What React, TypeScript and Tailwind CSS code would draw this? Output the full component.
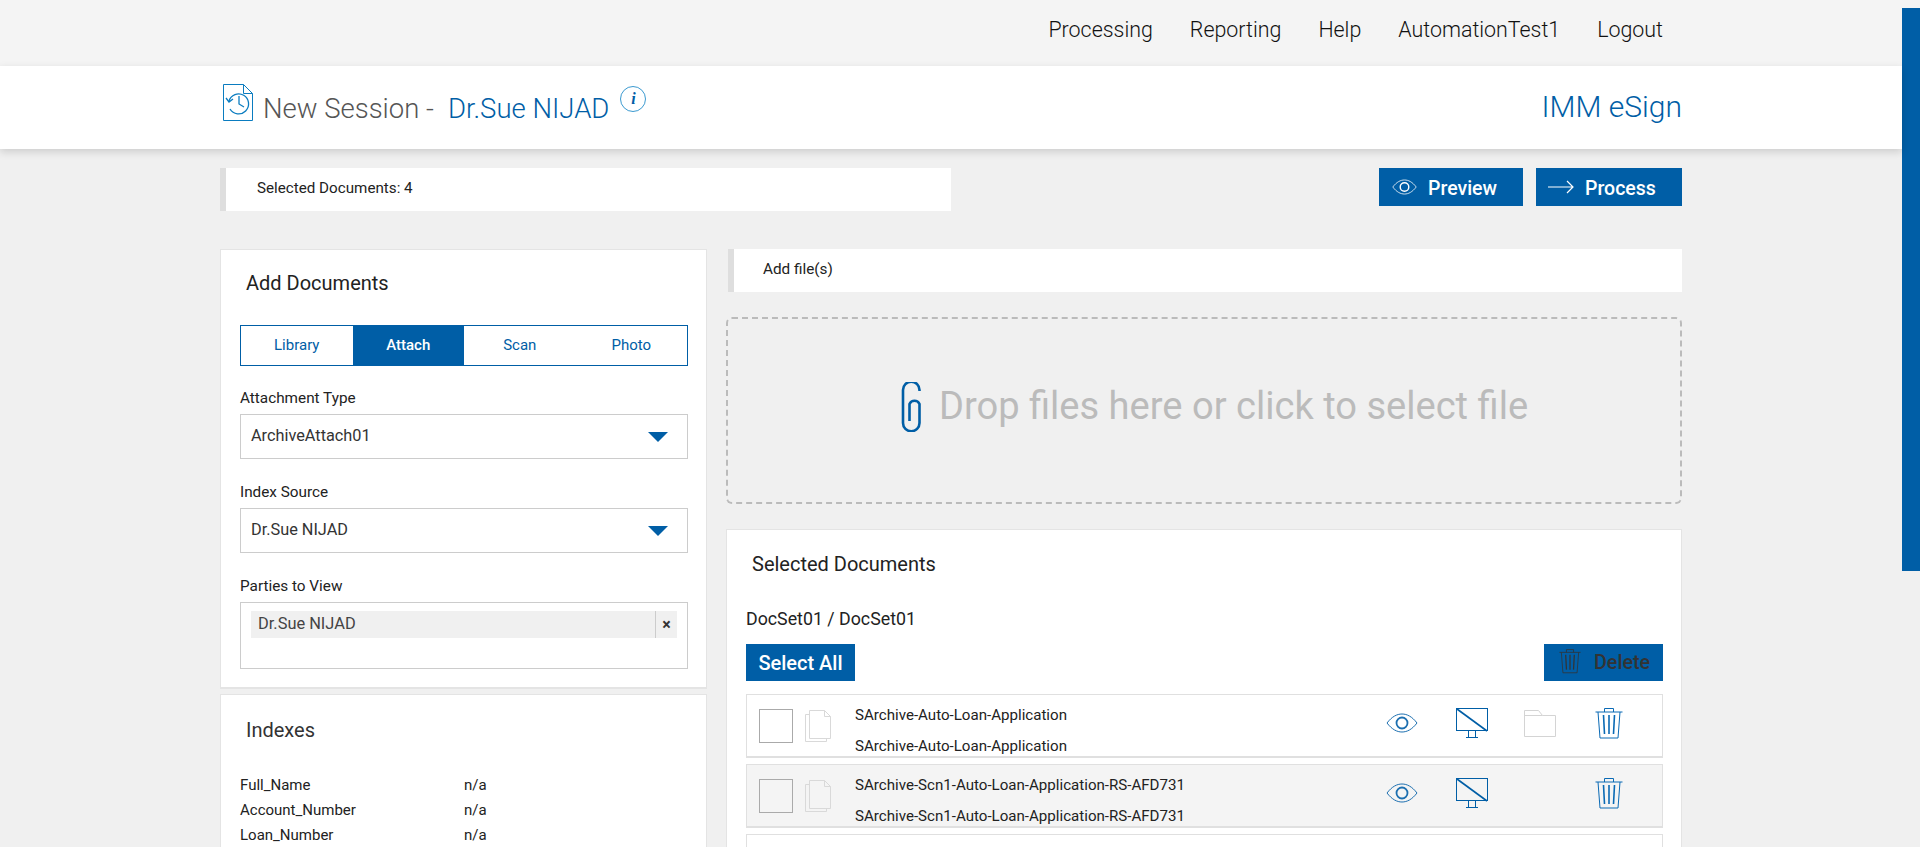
import { ReactNode } from 'react';

const font = { fontFamily: 'Roboto, sans-serif' };

function EyeIcon({ className }: { className?: string }) {
  return (
    <svg viewBox="0 0 32 20" className={className} fill="none" stroke="currentColor">
      <path d="M1 10C6 3.500 11 1 16 1s10 2.500 15 9c-5 6.500-10 9-15 9S6 16.500 1 10Z" strokeWidth="1" />
      <circle cx="16" cy="10" r="5.500" strokeWidth="1.800" />
    </svg>
  );
}

function MonitorIcon() {
  return (
    <svg viewBox="0 0 32 30" className="w-[32px] h-[30px] text-[#005ea6]" fill="none" stroke="currentColor">
      <rect x="0.500" y="0.500" width="31" height="22" strokeWidth="1" />
      <path d="M1 1l30 22" strokeWidth="1.600" />
      <path d="M12.500 23v6M19.500 23v6M10 29.500h12" strokeWidth="1" />
    </svg>
  );
}

function FolderIcon() {
  return (
    <svg viewBox="0 0 32 27" className="w-[32px] h-[27px] text-[#d4d4d4]" fill="none" stroke="currentColor">
      <path d="M0.500 26.500V0.500h14l4 5h13v21ZM0.500 5.500h18" strokeWidth="1" />
    </svg>
  );
}

function TrashIcon({ className }: { className?: string }) {
  return (
    <svg viewBox="0 0 28 32" className={className} fill="none" stroke="currentColor">
      <path d="M0.500 5h27M9.500 5V1.500h9V5" strokeWidth="1" />
      <path d="M3 5l2 26h18l2-26" strokeWidth="1" />
      <path d="M8.500 8l1 19M14 8v19M19.500 8l-1 19" strokeWidth="1.600" />
    </svg>
  );
}

function DocStackIcon() {
  return (
    <svg viewBox="0 0 26 32" className="w-[26px] h-[32px] text-[#d9d9d9] shrink-0" fill="none" stroke="currentColor">
      <path d="M4.500 4.500H0.500v27h21v-3" strokeWidth="1" />
      <path d="M4.500 0.500h15l6 6v22h-21ZM19.500 0.500v6h6" strokeWidth="1" />
    </svg>
  );
}

function CaretDown() {
  return <div className="w-0 h-0 border-l-[10px] border-r-[10px] border-t-[10px] border-l-transparent border-r-transparent border-t-[#005ea6]" />;
}

function SelectField({ label, value }: { label: string; value: string }) {
  return (
    <div>
      <div className="text-[15.300px] leading-[20px] text-[#222] mb-[6px]">{label}</div>
      <div className="h-[45px] border border-[#ccc] flex items-center justify-between pl-[10px] pr-[19px] text-[16.300px] text-[#333]">
        <span>{value}</span>
        <CaretDown />
      </div>
    </div>
  );
}

function Panel({ className, children }: { className?: string; children: ReactNode }) {
  return <div className={`bg-white border border-[#e4e4e4] border-b-2 ${className ?? ''}`}>{children}</div>;
}

function InfoBar({ className, children }: { className?: string; children: ReactNode }) {
  return (
    <div className={`bg-white border-l-[6px] border-[#dedede] h-[43px] flex items-center text-[#222] ${className ?? ''}`}>
      {children}
    </div>
  );
}

const rows = [
  { name: 'SArchive-Auto-Loan-Application', folder: true, shaded: false },
  { name: 'SArchive-Scn1-Auto-Loan-Application-RS-AFD731', folder: false, shaded: true },
  { name: '', folder: false, shaded: false },
];

const indexes = ['Full_Name', 'Account_Number', 'Loan_Number'];

export default function App() {
  return (
    <div className="h-screen overflow-hidden flex bg-[#f0f0f0]" style={font}>
      <div className="flex-1 min-w-0">
        {/* top nav */}
        <div className="h-[66px] bg-[#f4f4f4] flex items-center justify-end gap-[37px] pr-[239px] pb-[5px] text-[21.400px] font-light text-[#111]">
          <span>Processing</span>
          <span>Reporting</span>
          <span>Help</span>
          <span>AutomationTest1</span>
          <span>Logout</span>
        </div>

        {/* title bar */}
        <div className="h-[83px] bg-white shadow-[0_3px_8px_rgba(0,0,0,0.15)] flex items-start justify-between pl-[223px] pr-[220px] relative">
          <div className="flex items-start">
            <svg viewBox="0 0 30 37" className="w-[30px] h-[37px] mt-[18px] text-[#0a7cc0]" fill="none" stroke="currentColor">
              <path d="M0.500 0.500h20l9 9v27h-29ZM20.500 0.500v9h9" strokeWidth="1" />
              <path d="M6 17a10 10 0 1 1 1 8" strokeWidth="1.300" />
              <path d="M3 14l3 4 4-3M16 12v8l5 3" strokeWidth="1.300" />
            </svg>
            <span className="text-[27.500px] font-light text-[#555] ml-[10px] mt-[24px] leading-[38px]">New Session -</span>
            <span className="text-[27.500px] font-light text-[#005ea6] ml-[14px] mt-[24px] leading-[38px]">Dr.Sue NIJAD</span>
            <div className="w-[26px] h-[26px] ml-[11px] mt-[20px] rounded-full border border-[#3b9ad0] flex items-center justify-center text-[#005ea6] text-[16px] font-bold italic" style={{ fontFamily: '"Liberation Serif", serif' }}>
              i
            </div>
          </div>
          <span className="text-[30px] font-light text-[#005ea6] mt-[21px] leading-[40px]">IMM eSign</span>
        </div>

        <div className="pl-[220px] pr-[220px]">
          {/* toolbar */}
          <div className="flex items-start justify-between pt-[19px]">
            <InfoBar className="w-[731px] pl-[31px] text-[15.200px] pb-[2px]">Selected Documents: 4</InfoBar>
            <div className="flex gap-[13px]">
              <button className="w-[144px] h-[38px] bg-[#005ea6] text-white text-[19.500px] font-medium flex items-center pl-[13px] pt-[3px] gap-[11px]">
                <EyeIcon className="w-[25px] h-[16px] -mt-[4px]" />
                Preview
              </button>
              <button className="w-[146px] h-[38px] bg-[#005ea6] text-white text-[19.500px] font-medium flex items-center pl-[12px] pt-[3px] gap-[11px]">
                <svg viewBox="0 0 26 14" className="w-[26px] h-[14px] -mt-[4px]" fill="none" stroke="currentColor" strokeWidth="1.200">
                  <path d="M0 7h25M19 1l6 6-6 6" />
                </svg>
                Process
              </button>
            </div>
          </div>

          <div className="flex gap-[19px] mt-[38px]">
            {/* left column */}
            <div className="w-[487px] shrink-0 flex flex-col gap-[5px]">
              <Panel className="h-[440px] pl-[19px] pr-[18px]">
                <h2 className="text-[20px] text-[#222] ml-[6px] mt-[20px] leading-[26px]">Add Documents</h2>
                <div className="grid grid-cols-4 h-[41px] mt-[29px] border border-[#005ea6] text-[15px] text-[#005ea6]">
                  <div className="flex items-center justify-center">Library</div>
                  <div className="flex items-center justify-center bg-[#005ea6] text-white font-medium">Attach</div>
                  <div className="flex items-center justify-center">Scan</div>
                  <div className="flex items-center justify-center">Photo</div>
                </div>
                <div className="mt-[22px] flex flex-col gap-[23px]">
                  <SelectField label="Attachment Type" value="ArchiveAttach01" />
                  <SelectField label="Index Source" value="Dr.Sue NIJAD" />
                </div>
                <div className="text-[15.300px] leading-[20px] text-[#222] mt-[23px] mb-[6px]">Parties to View</div>
                <div className="h-[67px] border border-[#ccc] pl-[10px] pr-[10px] pt-[8px]">
                  <div className="h-[27px] bg-[#f0f0f0] flex items-center justify-between text-[16.400px] text-[#444]">
                    <span className="pl-[7px]">Dr.Sue NIJAD</span>
                    <span className="w-[22px] h-full border-l border-[#ccc] flex items-center justify-center text-[16px] font-bold text-[#333]">×</span>
                  </div>
                </div>
              </Panel>
              <Panel className="h-[300px] pl-[19px] pr-[18px]">
                <h2 className="text-[20px] text-[#333] ml-[6px] mt-[22px] leading-[26px]">Indexes</h2>
                <div className="mt-[30px] flex flex-col text-[15px] text-[#222]">
                  {indexes.map((name) => (
                    <div key={name} className="flex h-[25px] items-center">
                      <span className="w-[224px]">{name}</span>
                      <span>n/a</span>
                    </div>
                  ))}
                </div>
              </Panel>
            </div>

            {/* right column */}
            <div className="flex-1 min-w-0">
              <InfoBar className="text-[15.300px] pl-[29px] ml-[2px] pb-[2px]">Add file(s)</InfoBar>
              <div className="h-[187px] mt-[25px] border-2 border-dashed border-[#bbb] rounded-[6px] flex items-center justify-center gap-[18px] pb-[7px] pl-[21px]">
                <svg viewBox="0 0 20 50" className="w-[20px] h-[50px] text-[#005ea6]" fill="none" stroke="currentColor" strokeWidth="2.600">
                  <path d="M18.500 9V8A8 8 0 0 0 2 8v33a8 8 0 0 0 16.500 0V22a5.500 5.500 0 0 0-10 0v17" />
                </svg>
                <span className="text-[38.100px] text-[#bbb]">Drop files here or click to select file</span>
              </div>
              <Panel className="mt-[25px] h-[400px] pl-[19px] pr-[18px]">
                <h2 className="text-[20px] text-[#222] ml-[6px] mt-[21px] leading-[26px]">Selected Documents</h2>
                <div className="text-[17.800px] text-[#222] mt-[30px] leading-[24px]">DocSet01 / DocSet01</div>
                <div className="flex justify-between mt-[13px]">
                  <button className="w-[109px] h-[37px] bg-[#005ea6] text-white text-[20px] font-medium">Select All</button>
                  <button className="w-[119px] h-[37px] bg-[#005ea6] text-[#333] text-[19.700px] font-medium flex items-center pl-[15px] gap-[13px]">
                    <TrashIcon className="w-[22px] h-[26px] -mt-[4px]" />
                    Delete
                  </button>
                </div>
                <div className="mt-[13px] flex flex-col gap-[6px]">
                  {rows.map((row, i) => (
                    <div key={i} className={`h-[64px] border border-[#e0e0e0] border-b-2 flex items-center pl-[12px] ${row.shaded ? 'bg-[#f4f4f4]' : 'bg-white'}`}>
                      {row.name && (
                        <>
                          <div className="w-[34px] h-[34px] border border-[#aaa] shrink-0" />
                          <div className="ml-[12px]"><DocStackIcon /></div>
                          <div className="w-[521px] ml-[24px] pt-[10px] text-[15.100px] leading-[31px] text-[#222]">
                            <div>{row.name}</div>
                            <div>{row.name}</div>
                          </div>
                          <div className="w-[52px] flex justify-center -mt-[5px]"><EyeIcon className="w-[32px] h-[20px] text-[#1c6fb0]" /></div>
                          <div className="w-[32px] ml-[28px] -mt-[5px]"><MonitorIcon /></div>
                          <div className="w-[32px] h-[27px] ml-[36px] -mt-[5px]">{row.folder && <FolderIcon />}</div>
                          <div className="ml-[39px] -mt-[5px]"><TrashIcon className="w-[28px] h-[32px] text-[#0a6ab5]" /></div>
                        </>
                      )}
                    </div>
                  ))}
                </div>
              </Panel>
            </div>
          </div>
        </div>
      </div>

      {/* scrollbar */}
      <div className="w-[18px] shrink-0 bg-[#f0f0f0] flex flex-col">
        <div className="h-[8px] bg-[#f4f4f4]" />
        <div className="h-[563px] bg-[#005ea6]" />
      </div>
    </div>
  );
}
